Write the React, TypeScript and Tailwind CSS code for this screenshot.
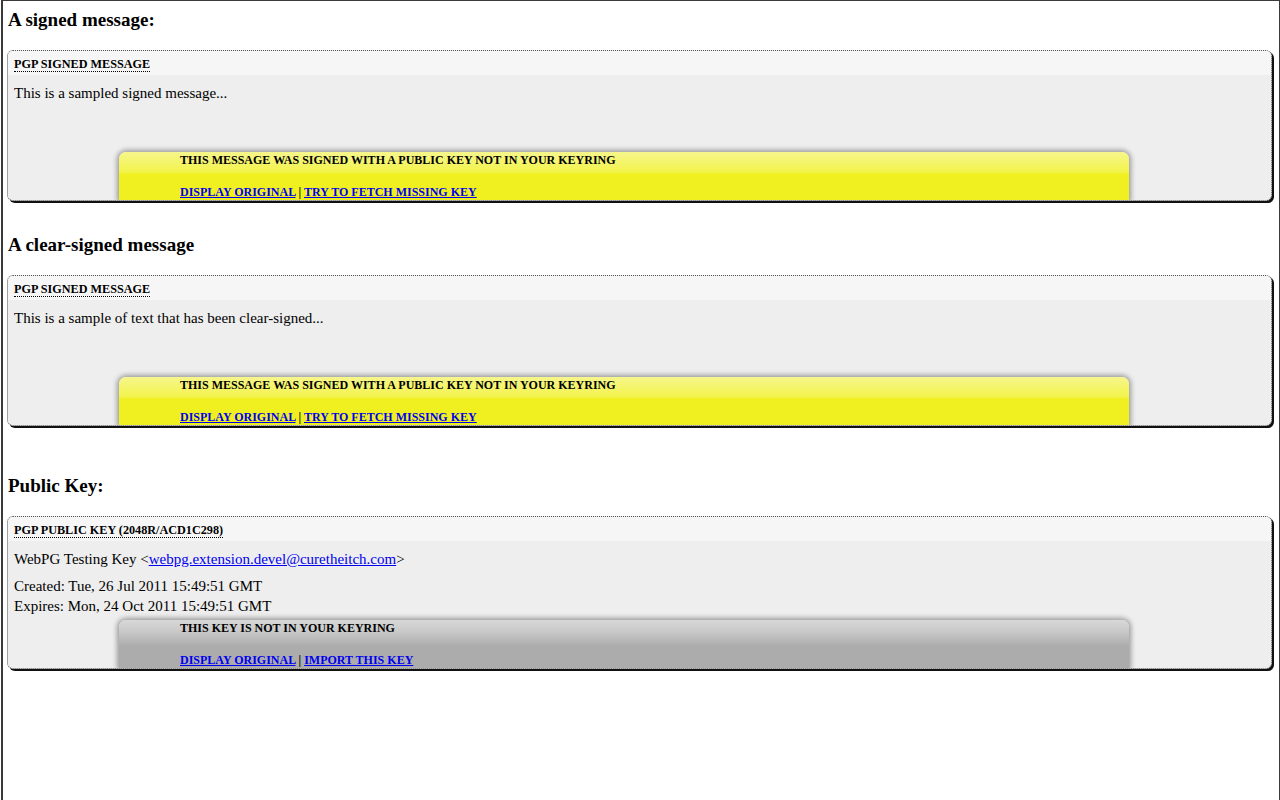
import React from "react";

type Tone = "yellow" | "gray";

function Banner({
  tone,
  title,
  action,
}: {
  tone: Tone;
  title: string;
  action: string;
}) {
  const bg =
    tone === "yellow"
      ? "bg-[linear-gradient(to_bottom,#f6f68c_0px,#f3f34c_20px,#f0f020_22px,#f0f020_100%)]"
      : "bg-[linear-gradient(to_bottom,#d8d8d8_0px,#c8c8c8_12px,#b8b8b8_20px,#acacac_26px,#acacac_100%)]";
  return (
    <div
      className={`ml-[111px] w-[1010px] rounded-t-[7px] shadow-[0_0_5px_2px_rgba(0,0,0,0.35)] ${bg} pl-[61px] text-[12px] font-bold leading-[14px] text-black`}
    >
      <div className="pt-[1px]">{title}</div>
      <div className="pt-[18px] pb-[1px]">
        <a href="#" className="text-[#0000ee] underline">
          DISPLAY ORIGINAL
        </a>{" "}
        |{" "}
        <a href="#" className="text-[#0000ee] underline">
          {action}
        </a>
      </div>
    </div>
  );
}

function PgpBox({
  header,
  children,
  bodyHeight,
  tone,
  title,
  action,
}: {
  header: string;
  children: React.ReactNode;
  bodyHeight: string;
  tone: Tone;
  title: string;
  action: string;
}) {
  return (
    <div className="ml-[4px] w-[1265px] overflow-hidden rounded-[6px] border border-dotted border-[#555] bg-[#eeeeee] shadow-[2px_2px_0_0_#111]">
      <div className="h-[24px] bg-[#f6f6f6] px-[6px] pt-[7px] text-[12.2px] leading-[13px]">
        <span className="border-b border-dotted border-black font-bold text-black">
          {header}
        </span>
      </div>
      <div className={`${bodyHeight} px-[6px] text-[15px] leading-[20px] text-black`}>
        {children}
      </div>
      <Banner tone={tone} title={title} action={action} />
    </div>
  );
}

export default function App() {
  return (
    <div className="h-[800px] w-[1280px] bg-white pl-px font-['Liberation_Serif','Times_New_Roman',serif]">
      <div className="h-[800px] border-t border-r border-l-2 border-[#3a3a3a]">
        <h3 className="pl-[5px] pt-[8px] text-[19px] font-bold leading-[22px] text-black">
          A signed message:
        </h3>
        <div className="h-[19px]" />
        <PgpBox
          header="PGP SIGNED MESSAGE"
          bodyHeight="h-[77px] pt-[8px]"
          tone="yellow"
          title="THIS MESSAGE WAS SIGNED WITH A PUBLIC KEY NOT IN YOUR KEYRING"
          action="TRY TO FETCH MISSING KEY"
        >
          This is a sampled signed message...
        </PgpBox>

        <h3 className="pl-[5px] pt-[33px] text-[19px] font-bold leading-[22px] text-black">
          A clear-signed message
        </h3>
        <div className="h-[19px]" />
        <PgpBox
          header="PGP SIGNED MESSAGE"
          bodyHeight="h-[77px] pt-[8px]"
          tone="yellow"
          title="THIS MESSAGE WAS SIGNED WITH A PUBLIC KEY NOT IN YOUR KEYRING"
          action="TRY TO FETCH MISSING KEY"
        >
          This is a sample of text that has been clear-signed...
        </PgpBox>

        <h3 className="pl-[5px] pt-[49px] text-[19px] font-bold leading-[22px] text-black">
          Public Key:
        </h3>
        <div className="h-[19px]" />
        <PgpBox
          header="PGP PUBLIC KEY (2048R/ACD1C298)"
          bodyHeight="h-[79px] pt-[8px]"
          tone="gray"
          title="THIS KEY IS NOT IN YOUR KEYRING"
          action="IMPORT THIS KEY"
        >
          <div>
            WebPG Testing Key &lt;
            <a href="#" className="text-[#0000ee] underline">
              webpg.extension.devel@curetheitch.com
            </a>
            &gt;
          </div>
          <div className="pt-[7px]">Created: Tue, 26 Jul 2011 15:49:51 GMT</div>
          <div>Expires: Mon, 24 Oct 2011 15:49:51 GMT</div>
        </PgpBox>
      </div>
    </div>
  );
}
